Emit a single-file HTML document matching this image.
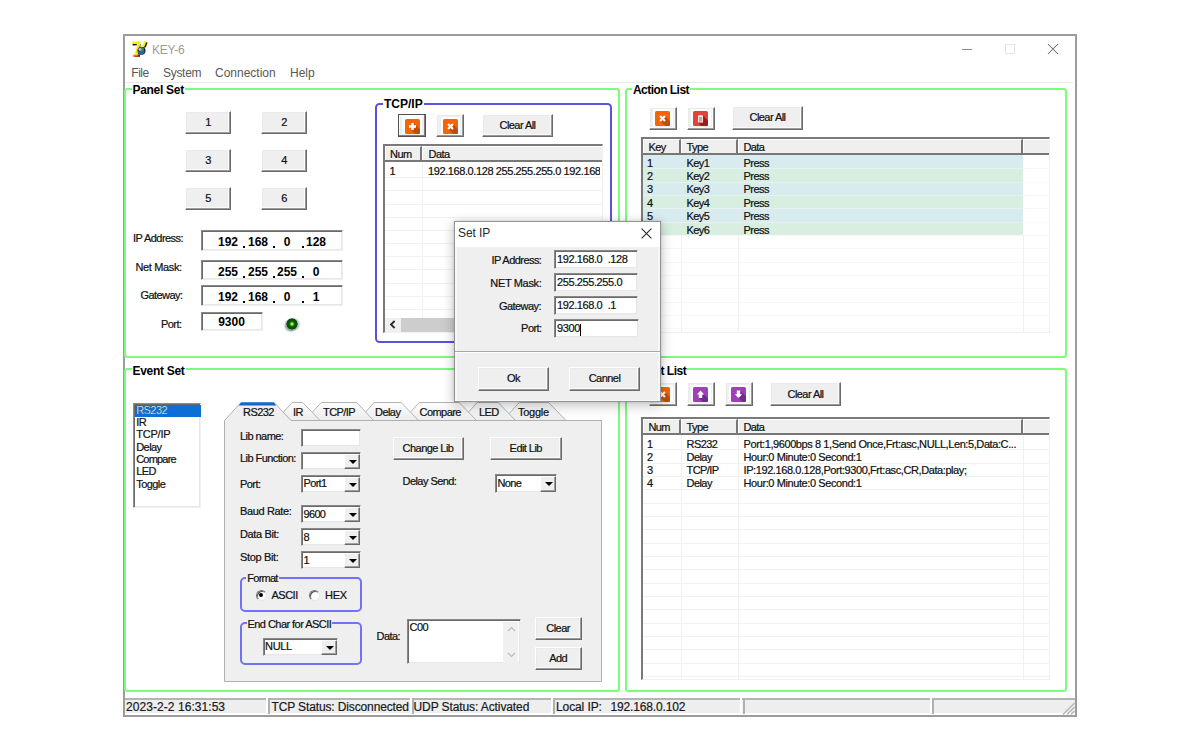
<!DOCTYPE html>
<html>
<head>
<meta charset="utf-8">
<title>KEY-6</title>
<style>
*{box-sizing:border-box;margin:0;padding:0}
html,body{width:1200px;height:750px;background:#fff;overflow:hidden}
body{position:relative;font-family:"Liberation Sans",sans-serif;font-size:11px;color:#111;line-height:1}
.a{position:absolute;white-space:nowrap}
/* ms sans serif like text */
.t{position:absolute;white-space:nowrap;font-size:11px;letter-spacing:-0.55px;color:#0c0c0c;line-height:13px;-webkit-text-stroke:0.22px #1a1a1a}
.tr{text-align:right}
.b{font-weight:bold}
/* main window */
#win{left:123px;top:34px;width:954px;height:683px;border:2px solid #9c9c9c;background:#fff}
.menu{position:absolute;top:66.4px;font-size:12px;color:#585858;line-height:14px;white-space:nowrap}
/* group boxes */
.grp{position:absolute;border:2px solid #7dfb7d;border-radius:3.5px}
.grpb{position:absolute;border:2px solid #5a52da;border-radius:4.5px}
.grpv{position:absolute;border:2px solid #7272f6;border-radius:5px}
.leg{position:absolute;background:#fff;font-weight:bold;font-size:12px;line-height:13px;color:#000;white-space:nowrap;letter-spacing:-0.3px;padding:0 1px}
/* 3d controls */
.btn{position:absolute;background:#efefef;border:1px solid;border-color:#fff #6a6a6a #6a6a6a #fff;box-shadow:inset -1px -1px 0 #9a9a9a,inset -2px -2px 0 #fafafa,inset 1px 1px 0 #eaeaea;text-align:center;font-size:11px;letter-spacing:-0.55px;color:#0c0c0c;white-space:nowrap;-webkit-text-stroke:0.22px #1a1a1a}
.btn.def{border-color:#505050;box-shadow:inset -1px -1px 0 #808080,inset 1px 1px 0 #fff}
.sunk{position:absolute;background:#fff;border:1px solid;border-color:#888 #eee #eee #888;box-shadow:inset 1px 1px 0 #6a6a6a,inset -1px -1px 0 #e7e7e7}

.ip i{position:absolute;top:4.3px;margin-left:-1px;font-style:normal;font-weight:bold;font-size:12px;line-height:15px;width:30px;text-align:center;color:#000}
.ip b{position:absolute;top:15.3px;margin-left:-.3px;width:2px;height:2px;background:#000}
.ico{position:absolute;display:block}
.lv{position:absolute;background:#fff;border:2px solid;border-color:#7a7a7a #f0f0f0 #f0f0f0 #7a7a7a;border-right-width:1px;border-bottom-width:1px;overflow:hidden}
.lvh{position:absolute;left:0;top:0;height:16px;background:#efefef;border-bottom:2px solid #777}
.lvh span{position:absolute;top:0;height:14px;padding:1px 0 0 4.4px;font-size:11px;letter-spacing:-0.55px;line-height:13px;color:#0c0c0c;-webkit-text-stroke:0.22px #1a1a1a;border-right:2px solid #777;border-left:1px solid #fff;border-top:1px solid #fff}
.lvg{position:absolute;left:0;background:repeating-linear-gradient(to bottom,transparent 0,transparent 12.33px,#f2f2f2 12.33px,#f2f2f2 13.33px)}

.cb span{position:absolute;left:1.6px;top:1.6px;font-size:11px;letter-spacing:-0.7px;line-height:13px;color:#0c0c0c;-webkit-text-stroke:0.22px #1a1a1a}
.cb u{position:absolute;right:0;top:1px;bottom:0;width:16px;background:#efefef;border:1px solid;border-color:#fff #6a6a6a #6a6a6a #fff;box-shadow:inset -1px -1px 0 #a0a0a0;text-decoration:none}
.cb u:after{content:"";position:absolute;left:4px;top:5px;border:4px solid transparent;border-top:4px solid #000;border-bottom:0}
.radio{position:absolute;width:11.5px;height:11.5px;border-radius:50%;background:#fff;border:1px solid;border-color:#7a7a7a #e8e8e8 #e8e8e8 #7a7a7a;box-shadow:inset 1px 1px 0 #555}
.radio s{position:absolute;left:2.75px;top:2.75px;width:4px;height:4px;border-radius:50%;background:#000}

.sbs{position:absolute;top:698px;width:4.4px;height:15.5px;border-left:2.3px solid #fff;border-right:2.1px solid #b0b0b0;border-top:0 solid #fff}
.st{position:absolute;top:699.5px;font-size:12px;line-height:15px;color:#161616;white-space:nowrap;-webkit-text-stroke:0.2px #222}

.ib:before{content:"";position:absolute;left:3.3px;top:1.2px;right:3px;bottom:2.3px;background:#fdfefe}
</style>
</head>
<body>
<div id="win" class="a"></div>

<!-- title bar -->
<div class="a" style="left:152px;top:43px;font-size:12px;color:#9a9a9a;line-height:14px;letter-spacing:-0.2px">KEY-6</div>

<!-- menu -->
<div class="menu" style="left:131.3px;letter-spacing:-0.5px">File</div>
<div class="menu" style="left:163px;letter-spacing:-0.3px">System</div>
<div class="menu" style="left:215px">Connection</div>
<div class="menu" style="left:290px">Help</div>
<div class="a" style="left:125px;top:82px;width:948px;height:1px;background:#e9e9e9"></div>

<!-- group boxes -->
<div class="grp" style="left:124.4px;top:88px;width:495.6px;height:270px"></div>
<div class="grp" style="left:625px;top:88px;width:442px;height:270px"></div>
<div class="grp" style="left:124.4px;top:368px;width:495.6px;height:324px"></div>
<div class="grp" style="left:625px;top:368px;width:442px;height:324px"></div>
<div class="leg" style="left:131.5px;top:84px">Panel Set</div>
<div class="leg" style="left:632px;top:84px;letter-spacing:-0.55px">Action List</div>
<div class="leg" style="left:131.5px;top:365px">Event Set</div>
<div class="leg" style="left:632.5px;top:365px;letter-spacing:-0.45px">Event List</div>

<!-- ===== Panel Set ===== -->
<div class="btn" style="left:185px;top:111px;width:46px;height:23px;line-height:21px">1</div>
<div class="btn" style="left:261px;top:111px;width:46px;height:23px;line-height:21px">2</div>
<div class="btn" style="left:185px;top:149px;width:46px;height:23px;line-height:21px">3</div>
<div class="btn" style="left:261px;top:149px;width:46px;height:23px;line-height:21px">4</div>
<div class="btn" style="left:185px;top:187px;width:46px;height:23px;line-height:21px">5</div>
<div class="btn" style="left:261px;top:187px;width:46px;height:23px;line-height:21px">6</div>

<div class="t tr" style="left:125px;width:58px;top:231.6px">IP Address:</div>
<div class="t tr" style="left:125px;width:56.8px;top:261px;letter-spacing:-0.35px">Net Mask:</div>
<div class="t tr" style="left:125px;width:57.5px;top:289px">Gateway:</div>
<div class="t tr" style="left:125px;width:56.5px;top:318px">Port:</div>

<div class="sunk ip" style="left:201px;top:230px;width:142px;height:20.6px"><i style="left:12px">192</i><i style="left:42px">168</i><i style="left:71px">0</i><i style="left:100px">128</i><b style="left:41px"></b><b style="left:71px"></b><b style="left:100px"></b></div>
<div class="sunk ip" style="left:201px;top:260px;width:142px;height:20.4px"><i style="left:12px">255</i><i style="left:42px">255</i><i style="left:71px">255</i><i style="left:100px">0</i><b style="left:41px"></b><b style="left:71px"></b><b style="left:100px"></b></div>
<div class="sunk ip" style="left:201px;top:285px;width:142px;height:20.6px"><i style="left:12px">192</i><i style="left:42px">168</i><i style="left:71px">0</i><i style="left:100px">1</i><b style="left:41px"></b><b style="left:71px"></b><b style="left:100px"></b></div>
<div class="sunk ip" style="left:201px;top:312px;width:61.5px;height:19px"><i style="left:15.5px;top:2.4px">9300</i></div>

<div class="a" style="left:285.7px;top:317.8px;width:12px;height:12px;border-radius:50%;background:radial-gradient(circle at 50% 50%,#ecd22e 0,#e4d030 1px,#2a9a3a 1.9px,#005c0a 2.8px,#005208 5.2px,rgba(0,70,10,.55) 5.8px,rgba(60,80,60,0) 6.2px);box-shadow:-1.2px 1.6px 1.5px rgba(40,40,50,.45),1.6px 0.2px 1.5px rgba(40,40,50,.3)"></div>

<!-- TCP/IP group -->
<div class="grpb" style="left:375px;top:103px;width:237px;height:240px"></div>
<div class="leg" style="left:383px;top:98px;letter-spacing:0">TCP/IP</div>
<div class="btn ib def" style="left:398px;top:113.7px;width:28.3px;height:23.5px"><svg class="ico" style="left:5.8px;top:4.3px" width="15" height="15" viewBox="0 0 15 15"><rect width="15" height="15" rx="1.6" fill="#f66408"/><path d="M8.7 4 L11 6.3 L15 10.3 V13.4 Q15 15 13.4 15 H10.3 L6.3 11 H8.7 V8.7 H11 V6.3 H8.7 Z" fill="#c04e0a"/><path d="M6.3 4h2.4v2.3H11v2.4H8.7V11H6.3V8.7H4V6.3h2.3z" fill="#fff"/></svg></div>
<div class="btn ib" style="left:436.3px;top:114.4px;width:28px;height:23px"><svg class="ico" style="left:5.3px;top:3.7px" width="15" height="15" viewBox="0 0 15 15"><rect width="15" height="15" rx="1.6" fill="#f66408"/><path d="M10.7 5.8 L15 10.1 V13.4 Q15 15 13.4 15 H10.1 L5.8 10.7 L7.5 9 L9.2 10.7 L10.7 9.2 L9 7.5 Z" fill="#c04e0a"/><path d="M4.3 5.8 5.8 4.3 7.5 6 9.2 4.3 10.7 5.8 9 7.5 10.7 9.2 9.2 10.7 7.5 9 5.8 10.7 4.3 9.2 6 7.5z" fill="#fff"/></svg></div>
<div class="btn" style="left:482px;top:114px;width:71px;height:23px;line-height:21px">Clear All</div>

<div class="lv" style="left:383px;top:144px;width:220px;height:189px">
  <div class="lvh" style="width:217px"><span style="left:0;width:37px;padding-left:4px">Num</span><span style="left:37px;width:195px;padding-left:5.5px">Data</span></div>
  <div class="lvg" style="top:18.8px;height:155px;width:217px;background:repeating-linear-gradient(to bottom,transparent 0,transparent 12.175px,#f2f2f2 12.175px,#f2f2f2 13.175px)"></div>
  <div class="a" style="left:37px;top:17px;width:1px;height:157px;background:#f0f0f0"></div>
  <div class="t" style="left:4.5px;top:19px">1</div>
  <div class="t" style="left:43px;top:19px;width:171.5px;overflow:hidden;letter-spacing:-0.4px">192.168.0.128 255.255.255.0 192.168.0.1</div>
  <div class="a" style="left:0;top:172px;width:218px;height:15px;background:#f0f0f0"></div>
  <div class="a" style="left:16px;top:172px;width:120px;height:15px;background:#cdcdcd"></div>
  <svg class="a" style="left:3.8px;top:174.2px" width="7" height="9" viewBox="0 0 7 9"><path d="M5.6 1 2 4.5 5.6 8" fill="none" stroke="#2a2a2a" stroke-width="1.8"/></svg>
</div>
<!--PANELSET-->
<!-- ===== Action List ===== -->
<div class="btn ib" style="left:648.7px;top:106.6px;width:28px;height:23px"><svg class="ico" style="left:5.3px;top:3.5px" width="15" height="15" viewBox="0 0 15 15"><rect width="15" height="15" rx="1.6" fill="#f66408"/><path d="M10.7 5.8 L15 10.1 V13.4 Q15 15 13.4 15 H10.1 L5.8 10.7 L7.5 9 L9.2 10.7 L10.7 9.2 L9 7.5 Z" fill="#c04e0a"/><path d="M4.3 5.8 5.8 4.3 7.5 6 9.2 4.3 10.7 5.8 9 7.5 10.7 9.2 9.2 10.7 7.5 9 5.8 10.7 4.3 9.2 6 7.5z" fill="#fff"/></svg></div>
<div class="btn ib" style="left:686.7px;top:106.6px;width:28px;height:23px"><svg class="ico" style="left:5.3px;top:3.5px" width="15" height="15" viewBox="0 0 15 15"><rect width="15" height="15" rx="1.6" fill="#e2423a"/><path d="M10 4.6 L15 9.6 V13.4 Q15 15 13.4 15 H8.4 L5 11.6 H10 Z" fill="#9c1c16"/><path d="M5 4.6h1.5V3.9h2v.7H10V11.6H5z" fill="#f4e9e6"/><rect x="5.9" y="6" width="3.2" height="4.6" fill="#c9a39c"/></svg></div>
<div class="btn" style="left:732px;top:106.4px;width:71px;height:23.4px;line-height:21px">Clear All</div>

<div class="lv" style="left:641px;top:137px;width:409px;height:196px">
  <div class="lvh" style="width:407px"><span style="left:0;width:38px">Key</span><span style="left:38px;width:57px">Type</span><span style="left:95px;width:285px">Data</span><span style="left:380px;width:28px;border-right:0"></span></div>
  <div class="a" style="left:0;top:16px;width:380px;height:13.4px;background:#d8ecf0"></div>
  <div class="a" style="left:0;top:29.4px;width:380px;height:13.4px;background:#d8eee0"></div>
  <div class="a" style="left:0;top:42.8px;width:380px;height:13.4px;background:#d8ecf0"></div>
  <div class="a" style="left:0;top:56.2px;width:380px;height:13.4px;background:#d8eee0"></div>
  <div class="a" style="left:0;top:69.6px;width:380px;height:13.4px;background:#d8ecf0"></div>
  <div class="a" style="left:0;top:83px;width:380px;height:13.4px;background:#d8eee0"></div>
  <div class="lvg" style="top:17.3px;height:177px;width:407px;opacity:.6"></div>
  <div class="a" style="left:38px;top:96px;width:1px;height:98px;background:#f0f0f0"></div>
  <div class="a" style="left:95px;top:96px;width:1px;height:98px;background:#f0f0f0"></div>
  <div class="a" style="left:380px;top:96px;width:1px;height:98px;background:#f0f0f0"></div>
  <div class="t" style="left:4px;top:17.5px;line-height:13.4px">1<br>2<br>3<br>4<br>5<br>6</div>
  <div class="t" style="left:43.5px;top:17.5px;line-height:13.4px">Key1<br>Key2<br>Key3<br>Key4<br>Key5<br>Key6</div>
  <div class="t" style="left:100.5px;top:17.5px;line-height:13.4px">Press<br>Press<br>Press<br>Press<br>Press<br>Press</div>
</div>
<!--ACTIONLIST-->
<!-- ===== Event Set ===== -->
<div class="sunk" style="left:133px;top:403px;width:68px;height:105px;border-color:#8c8c8c #f0f0f0 #f0f0f0 #8c8c8c">
  <div class="a" style="left:1px;top:1px;width:66px;height:11.6px;background:#0b6fd6"></div>
  <div class="t" style="left:2.2px;top:-0.4px;line-height:12.35px;color:#fff">RS232</div>
  <div class="t" style="left:2.2px;top:11.95px;line-height:12.35px">IR<br><span style="letter-spacing:-0.2px">TCP/IP</span><br>Delay<br><span style="letter-spacing:-0.8px">Compare</span><br>LED<br>Toggle</div>
</div>

<!-- tab control -->
<svg class="a" style="left:222px;top:400px" width="384" height="286" viewBox="222 400 384 286">
  <defs><linearGradient id="tg" x1="0" y1="0" x2="0" y2="1"><stop offset="0" stop-color="#fdfdfd"/><stop offset="1" stop-color="#ececec"/></linearGradient></defs>
  <!-- inactive tabs (drawn right to left so left overlaps) -->
  <path d="M503 420.5 L517.8 404 L519.3 402.5 H548.7 L550.2 404 L566 420.5 Z" fill="url(#tg)" stroke="#b4b4b4" stroke-width="1"/>
  <path d="M461 420.5 L475.8 404 L477.3 402.5 H498.2 L499.7 404 L515.5 420.5 Z" fill="url(#tg)" stroke="#b4b4b4" stroke-width="1"/>
  <path d="M403 420.5 L417.8 404 L419.3 402.5 H459.2 L460.7 404 L476.5 420.5 Z" fill="url(#tg)" stroke="#b4b4b4" stroke-width="1"/>
  <path d="M358 420.5 L372.8 404 L374.3 402.5 H401.2 L402.7 404 L418.5 420.5 Z" fill="url(#tg)" stroke="#b4b4b4" stroke-width="1"/>
  <path d="M305 420.5 L319.8 404 L321.3 402.5 H356.7 L358.2 404 L373.5 420.5 Z" fill="url(#tg)" stroke="#b4b4b4" stroke-width="1"/>
  <path d="M276 420.5 L290.8 404 L292.3 402.5 H302.7 L304.2 404 L320 420.5 Z" fill="url(#tg)" stroke="#b4b4b4" stroke-width="1"/>
  <!-- panel + active tab -->
  <path d="M224.5 420.5 L239.5 404 H275.5 L291 420.5 H601.5 V681.5 H224.5 Z" fill="#efefef" stroke="#b0b0b0" stroke-width="1"/>
  <path d="M291 420.5 H601.5" stroke="#b0b0b0" stroke-width="1" fill="none"/>
  <path d="M241 402.3 H274 L276.2 405.6 H238.8 Z" fill="#1266cc"/>
</svg>
<div class="t" style="left:243px;top:406px">RS232</div>
<div class="t" style="left:293px;top:406px">IR</div>
<div class="t" style="left:323px;top:406px">TCP/IP</div>
<div class="t" style="left:375px;top:406px">Delay</div>
<div class="t" style="left:419.5px;top:406px">Compare</div>
<div class="t" style="left:479px;top:406px">LED</div>
<div class="t" style="left:518px;top:406px;letter-spacing:-0.25px">Toggle</div>

<div class="t" style="left:240px;top:429.5px">Lib name:</div>
<div class="t" style="left:240px;top:452px">Lib Function:</div>
<div class="t" style="left:240px;top:478px">Port:</div>
<div class="t" style="left:240px;top:505px;letter-spacing:-0.35px">Baud Rate:</div>
<div class="t" style="left:240px;top:528px;letter-spacing:-0.35px">Data Bit:</div>
<div class="t" style="left:240px;top:550.5px;letter-spacing:-0.35px">Stop Bit:</div>

<div class="sunk" style="left:301px;top:429px;width:59.5px;height:18px"></div>
<div class="sunk cb" style="left:301px;top:452px;width:59.5px;height:17.5px"><u></u></div>
<div class="sunk cb" style="left:301px;top:474.5px;width:59.5px;height:18px"><span>Port1</span><u></u></div>
<div class="sunk cb" style="left:301px;top:505px;width:59.5px;height:17.5px"><span>9600</span><u></u></div>
<div class="sunk cb" style="left:301px;top:528px;width:59.5px;height:17.5px"><span>8</span><u></u></div>
<div class="sunk cb" style="left:301px;top:551px;width:59.5px;height:17.5px"><span>1</span><u></u></div>

<div class="btn" style="left:392.5px;top:437px;width:71px;height:23px;line-height:21px">Change Lib</div>
<div class="btn" style="left:490px;top:437px;width:71.5px;height:23px;line-height:21px">Edit Lib</div>
<div class="t" style="left:402.5px;top:475px">Delay Send:</div>
<div class="sunk cb" style="left:495px;top:474px;width:62px;height:18.5px"><span>None</span><u></u></div>

<div class="grpv" style="left:239.6px;top:577px;width:122.6px;height:34.6px"></div>
<div class="t" style="left:246.3px;top:572.3px;background:#efefef;padding:0 1px;letter-spacing:-0.75px">Format</div>
<div class="radio" style="left:255.5px;top:589.5px"><s></s></div>
<div class="t" style="left:271.5px;top:589px;letter-spacing:-0.5px">ASCII</div>
<div class="radio" style="left:308.5px;top:589.5px"></div>
<div class="t" style="left:325px;top:589px;letter-spacing:-0.3px">HEX</div>

<div class="grpv" style="left:239.6px;top:622.3px;width:122.6px;height:42.4px"></div>
<div class="t" style="left:246.5px;top:618px;background:#efefef;padding:0 1px">End Char for ASCII</div>
<div class="sunk cb" style="left:262.5px;top:637.5px;width:75.5px;height:18px"><span style="letter-spacing:-0.4px">NULL</span><u></u></div>

<div class="t" style="left:376.5px;top:629.5px">Data:</div>
<div class="sunk" style="left:406.5px;top:618.5px;width:114px;height:45px">
  <div class="t" style="left:2px;top:1.6px">C00</div>
  <div class="a" style="right:2px;top:2px;width:15px;height:41px;background:#f0f0f0"></div>
  <svg class="a" style="right:4px;top:6px" width="9" height="6" viewBox="0 0 9 6"><path d="M1 5 4.5 1.5 8 5" fill="none" stroke="#bdbdbd" stroke-width="1.2"/></svg>
  <svg class="a" style="right:4px;top:32px" width="9" height="6" viewBox="0 0 9 6"><path d="M1 1 4.5 4.5 8 1" fill="none" stroke="#bdbdbd" stroke-width="1.2"/></svg>
</div>
<div class="btn" style="left:534.6px;top:616.6px;width:47px;height:23px;line-height:21px">Clear</div>
<div class="btn" style="left:534.6px;top:647.3px;width:47px;height:23px;line-height:21px">Add</div>
<!--EVENTSET-->
<!-- ===== Event List ===== -->
<div class="btn ib" style="left:648.7px;top:382.4px;width:28px;height:23.3px"><svg class="ico" style="left:5.3px;top:4.0px" width="15" height="15" viewBox="0 0 15 15"><rect width="15" height="15" rx="1.6" fill="#f66408"/><path d="M10.7 5.8 L15 10.1 V13.4 Q15 15 13.4 15 H10.1 L5.8 10.7 L7.5 9 L9.2 10.7 L10.7 9.2 L9 7.5 Z" fill="#c04e0a"/><path d="M4.3 5.8 5.8 4.3 7.5 6 9.2 4.3 10.7 5.8 9 7.5 10.7 9.2 9.2 10.7 7.5 9 5.8 10.7 4.3 9.2 6 7.5z" fill="#fff"/></svg></div>
<div class="btn ib" style="left:686.7px;top:382.4px;width:28px;height:23.3px"><svg class="ico" style="left:5.3px;top:4.0px" width="15" height="15" viewBox="0 0 15 15"><rect width="15" height="15" rx="1.6" fill="#a040b8"/><path d="M11.2 7.4 L15 11.2 V13.4 Q15 15 13.4 15 H9.8 L5.8 11 H9.2 V7.4 Z" fill="#6e2c8e"/><path d="M7.5 3.6 11.2 7.4H9.2V11H5.8V7.4H3.8z" fill="#fff"/></svg></div>
<div class="btn ib" style="left:724.5px;top:382.4px;width:28px;height:23.3px"><svg class="ico" style="left:5.3px;top:4.0px" width="15" height="15" viewBox="0 0 15 15"><rect width="15" height="15" rx="1.6" fill="#a040b8"/><path d="M9.2 3.6 L15 9.4 V13.4 Q15 15 13.4 15 H11.5 L7.5 11 L11.2 7.2 H9.2 Z" fill="#6e2c8e"/><path d="M7.5 11 3.8 7.2H5.8V3.6H9.2V7.2H11.2z" fill="#fff"/></svg></div>
<div class="btn" style="left:770px;top:382px;width:71px;height:24px;line-height:22px">Clear All</div>

<div class="lv" style="left:641px;top:417px;width:409px;height:263px">
  <div class="lvh" style="width:407px"><span style="left:0;width:38px">Num</span><span style="left:38px;width:57px">Type</span><span style="left:95px;width:285px">Data</span><span style="left:380px;width:28px;border-right:0"></span></div>
  <div class="lvg" style="top:17.5px;height:243px;width:407px"></div>
  <div class="a" style="left:38px;top:16px;width:1px;height:245px;background:#f0f0f0"></div>
  <div class="a" style="left:95px;top:16px;width:1px;height:245px;background:#f0f0f0"></div>
  <div class="a" style="left:380px;top:16px;width:1px;height:245px;background:#f0f0f0"></div>
  <div class="t" style="left:4px;top:18.5px;line-height:13.2px">1<br>2<br>3<br>4</div>
  <div class="t" style="left:43.5px;top:18.5px;line-height:13.2px">RS232<br>Delay<br>TCP/IP<br>Delay</div>
  <div class="t" style="left:100.5px;top:18.5px;line-height:13.2px;letter-spacing:-0.41px">Port:1,9600bps 8 1,Send Once,Frt:asc,NULL,Len:5,Data:C...<br>Hour:0 Minute:0 Second:1<br>IP:192.168.0.128,Port:9300,Frt:asc,CR,Data:play;<br>Hour:0 Minute:0 Second:1</div>
</div>
<!--EVENTLIST-->
<!-- ===== Status bar ===== -->
<div class="a" style="left:125px;top:698px;width:950px;height:17px;background:#eee;border-top:2px solid #b4b4b4;border-bottom:2px solid #fff"></div>
<div class="sbs" style="left:266px"></div>
<div class="sbs" style="left:409.5px"></div>
<div class="sbs" style="left:550.5px"></div>
<div class="sbs" style="left:740.4px"></div>
<div class="sbs" style="left:929.5px"></div>
<div class="st" style="left:126px;letter-spacing:0.06px">2023-2-2 16:31:53</div>
<div class="st" style="left:271.5px;letter-spacing:-0.13px">TCP Status: Disconnected</div>
<div class="st" style="left:413.5px;letter-spacing:-0.1px">UDP Status: Activated</div>
<div class="st" style="left:556px;letter-spacing:-0.1px">Local IP:</div>
<div class="st" style="left:610.5px;letter-spacing:-0.15px">192.168.0.102</div>
<svg class="a" style="left:1062px;top:702px" width="13" height="13" viewBox="0 0 13 13"><path d="M12.5 1 1 12.5M12.5 5 5 12.5M12.5 9 9 12.5" stroke="#b0b0b0" stroke-width="1.2" fill="none"/></svg>
<!-- title bar icon + caption buttons -->
<svg class="a" style="left:132px;top:41px" width="17" height="17" viewBox="0 0 17 17">
  <path d="M.6 3h4.2v1.4H.6z" fill="#111"/>
  <path d="M6.2 4.2 8.9 3 6.6 13.4 5 13.6z" fill="#8a2010"/>
  <path d="M.3.6h8.6L5.6 13.8H2.6L5.6 3H.3z" fill="#f6ee00"/>
  <path d="M.8 13.7h5.6v2.2H.8z" fill="#e8a018"/>
  <path d="M2.4 14.6h4v1.3h-4z" fill="#d03010"/>
  <path d="M6.2 13.6h1.7v2.2H6.2z" fill="#111"/>
  <path d="M13.2 1.2 15.6 1.6 13.8 6.2 11.2 7z" fill="#10143a"/>
  <circle cx="9.5" cy="9.8" r="4" fill="#141a44"/>
  <path d="M5.9 10.2a3.4 3.4 0 0 0 6.8 0z" fill="#2c5cae"/>
  <circle cx="9.6" cy="8.6" r="2.5" fill="#1c9a30"/>
  <circle cx="7.9" cy="8.2" r="1.5" fill="#d8a0d8"/>
  <path d="M12 .2 14.6.2 12.4 5.8 10.4 6z" fill="#f6ee00"/>
</svg>
<div class="a" style="left:962px;top:49px;width:10px;height:1px;background:#8c8c8c"></div>
<div class="a" style="left:1005px;top:44px;width:10px;height:10px;border:1px solid #e2e6e6"></div>
<svg class="a" style="left:1047px;top:43px" width="12" height="12" viewBox="0 0 12 12"><path d="M1 1 11 11M11 1 1 11" stroke="#6e6e6e" stroke-width="1.05" fill="none"/></svg>
<!--STATUSBAR-->
<!-- ===== Set IP dialog ===== -->
<div class="a" style="left:454px;top:221px;width:207px;height:181px;background:#fff;border:1px solid #949494;box-shadow:0 3px 11px 1px rgba(0,0,0,.22),0 0 3px rgba(0,0,0,.14)"></div>
<div class="a" style="left:455px;top:222px;width:205px;height:179px;background:#f7f7f7"></div><div class="a" style="left:455px;top:222px;width:205px;height:25px;background:#fff"></div><div class="a" style="left:457px;top:247px;width:201px;height:153px;background:#efefef"></div>
<div class="a" style="left:458px;top:226px;font-size:12px;line-height:14px;color:#2a2a2a;letter-spacing:-0.1px">Set IP</div>
<svg class="a" style="left:640px;top:226.5px" width="13" height="13" viewBox="0 0 13 13"><path d="M1.6 1.6 11.4 11.4M11.4 1.6 1.6 11.4" stroke="#2a2a2a" stroke-width="1.1" fill="none"/></svg>

<div class="t tr" style="left:470px;width:71.4px;top:253.6px">IP Address:</div>
<div class="t tr" style="left:470px;width:71.4px;top:276.6px;letter-spacing:-0.35px">NET Mask:</div>
<div class="t tr" style="left:470px;width:71px;top:299.5px">Gateway:</div>
<div class="t tr" style="left:470px;width:71.6px;top:322px">Port:</div>
<div class="sunk" style="left:553.5px;top:250px;width:84px;height:19.4px"><div class="t" style="left:2.5px;top:2.2px;white-space:pre;letter-spacing:-0.4px">192.168.0  .128</div></div>
<div class="sunk" style="left:553.5px;top:273px;width:84px;height:19.4px"><div class="t" style="left:2.5px;top:2.2px;letter-spacing:-0.4px">255.255.255.0</div></div>
<div class="sunk" style="left:553.5px;top:296px;width:84px;height:19.4px"><div class="t" style="left:2.5px;top:2.2px;white-space:pre;letter-spacing:-0.4px">192.168.0  .1</div></div>
<div class="sunk" style="left:553.5px;top:319px;width:85.5px;height:19.4px"><div class="t" style="left:2.5px;top:2.2px;letter-spacing:-0.4px">9300</div><div class="a" style="left:25.5px;top:3.5px;width:1px;height:12px;background:#000"></div></div>

<div class="a" style="left:455px;top:351px;width:205px;height:1px;background:#a8a8a8"></div>
<div class="a" style="left:455px;top:352px;width:205px;height:1px;background:#fff"></div>
<div class="btn" style="left:478px;top:367px;width:71px;height:23.5px;line-height:21px">Ok</div>
<div class="btn" style="left:569px;top:367px;width:71px;height:23.5px;line-height:21px">Cannel</div>
<!--DIALOG-->
</body>
</html>
